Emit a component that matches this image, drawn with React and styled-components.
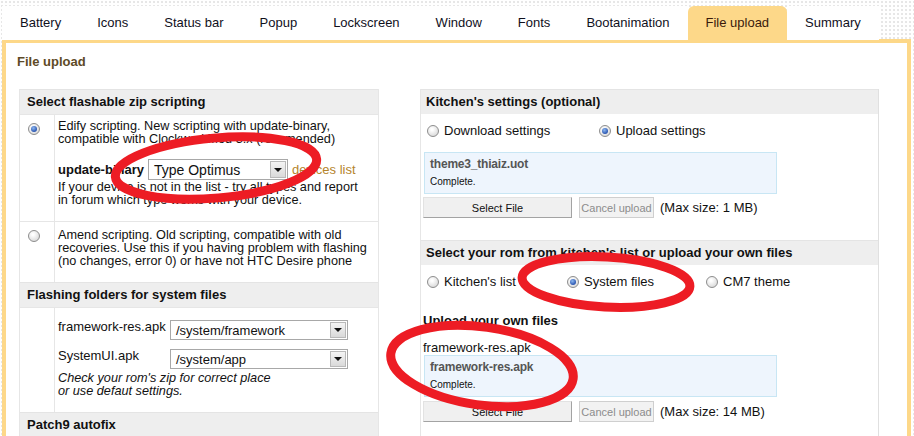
import styled, { createGlobalStyle } from "styled-components";

const GlobalStyle = createGlobalStyle`
  html, body {
    margin: 0;
    padding: 0;
  }
  body {
    font-family: "Liberation Sans", Arial, sans-serif;
    font-size: 13px;
    color: #111;
    background-color: #fff;
    background-image: radial-gradient(#e6e6e6 0.7px, transparent 0.9px);
    background-size: 4px 4px;
    overflow: hidden;
  }
`;

const tabs = [
  "Battery",
  "Icons",
  "Status bar",
  "Popup",
  "Lockscreen",
  "Window",
  "Fonts",
  "Bootanimation",
  "File upload",
  "Summary",
];

export default function App() {
  return (
    <>
      <GlobalStyle />
      <Page>
        <TabBar>
          {tabs.map((t) => (
            <Tab key={t} $active={t === "File upload"}>
              {t}
            </Tab>
          ))}
        </TabBar>
        <Panel>
          <Heading>File upload</Heading>
          <Columns>
            <LeftBox>
              <BoxHeader>Select flashable zip scripting</BoxHeader>
              <OptionRow $pt={5} $pb={14}>
                <RadioCell>
                  <Radio $checked />
                </RadioCell>
                <OptionBody>
                  <Line>Edify scripting. New scripting with update-binary,</Line>
                  <Line>compatible with ClockworkMod 3.x (recomended)</Line>
                  <BinaryRow>
                    <b>update-binary</b>
                    <Select $width={140}>
                      <SelectText $size={14}>Type Optimus</SelectText>
                      <SelectArrow />
                    </Select>
                    <DevLink>devices list</DevLink>
                  </BinaryRow>
                  <Line>If your device is not in the list - try all types and report</Line>
                  <Line>in forum which type works with your device.</Line>
                </OptionBody>
              </OptionRow>
              <OptionRow $pt={7} $pb={14}>
                <RadioCell>
                  <Radio />
                </RadioCell>
                <OptionBody>
                  <Line>Amend scripting. Old scripting, compatible with old</Line>
                  <Line>recoveries. Use this if you having problem with flashing</Line>
                  <Line>(no changes, error 0) or have not HTC Desire phone</Line>
                </OptionBody>
              </OptionRow>
              <BoxHeader>Flashing folders for system files</BoxHeader>
              <OptionRow $pt={12} $pb={14}>
                <RadioCell />
                <OptionBody>
                  <FolderRow $mb={9}>
                    <FolderLabel>framework-res.apk</FolderLabel>
                    <Select $width={178} $height={20}>
                      <SelectText>/system/framework</SelectText>
                      <SelectArrow />
                    </Select>
                  </FolderRow>
                  <FolderRow $mb={3}>
                    <FolderLabel>SystemUI.apk</FolderLabel>
                    <Select $width={178} $height={20}>
                      <SelectText>/system/app</SelectText>
                      <SelectArrow />
                    </Select>
                  </FolderRow>
                  <Hint>Check your rom's zip for correct place</Hint>
                  <Hint>or use defaut settings.</Hint>
                </OptionBody>
              </OptionRow>
              <BoxHeader>Patch9 autofix</BoxHeader>
            </LeftBox>

            <RightBox>
              <BoxHeader $pl={5}>Kitchen's settings (optional)</BoxHeader>
              <RightBody>
                <RadioLine>
                  <RadioItem $width={172}>
                    <Radio />
                    Download settings
                  </RadioItem>
                  <RadioItem>
                    <Radio $checked />
                    Upload settings
                  </RadioItem>
                </RadioLine>
                <UploadBox>
                  <FileName>theme3_thiaiz.uot</FileName>
                  <Status>Complete.</Status>
                </UploadBox>
                <ButtonRow>
                  <SelectButton>Select File</SelectButton>
                  <CancelButton>Cancel upload</CancelButton>
                  <MaxSize>(Max size: 1 MB)</MaxSize>
                </ButtonRow>
              </RightBody>
              <SectionGap />
              <BoxHeader $pl={5}>
                Select your rom from kitchen's list or upload your own files
              </BoxHeader>
              <RightBody>
                <RadioLine>
                  <RadioItem $width={140}>
                    <Radio />
                    Kitchen's list
                  </RadioItem>
                  <RadioItem $width={139}>
                    <Radio $checked />
                    System files
                  </RadioItem>
                  <RadioItem>
                    <Radio />
                    CM7 theme
                  </RadioItem>
                </RadioLine>
                <SubTitle>Upload your own files</SubTitle>
                <FileLabel>framework-res.apk</FileLabel>
                <UploadBox $mt={0}>
                  <FileName>framework-res.apk</FileName>
                  <Status>Complete.</Status>
                </UploadBox>
                <ButtonRow $mt={4}>
                  <SelectButton>Select File</SelectButton>
                  <CancelButton>Cancel upload</CancelButton>
                  <MaxSize>(Max size: 14 MB)</MaxSize>
                </ButtonRow>
              </RightBody>
            </RightBox>
          </Columns>
        </Panel>
        <Marks viewBox="0 0 914 436" width="914" height="436">
          <ellipse
            cx="216"
            cy="168"
            rx="101"
            ry="30"
            transform="rotate(-5 216 168)"
          />
          <ellipse
            cx="606"
            cy="282"
            rx="84"
            ry="25"
            transform="rotate(3 606 282)"
          />
          <ellipse
            cx="482"
            cy="366"
            rx="92"
            ry="39"
            transform="rotate(8 482 366)"
          />
        </Marks>
      </Page>
    </>
  );
}

const Page = styled.div`
  position: relative;
  width: 914px;
  height: 436px;
  padding: 6px 0 0 2px;
  box-sizing: border-box;
  overflow: hidden;
`;

const TabBar = styled.div`
  display: flex;
  height: 34px;
`;

const Tab = styled.div`
  padding: 0 18px;
  line-height: 34px;
  font-size: 13px;
  background: ${(p) => (p.$active ? "#fdd889" : "#fff")};
  border-radius: ${(p) => (p.$active ? "6px 6px 0 0" : "0")};
  color: ${(p) => (p.$active ? "#3a1a0c" : "#10101c")};
  white-space: nowrap;
`;

const Panel = styled.div`
  width: 909px;
  height: 400px;
  box-sizing: border-box;
  border: 4px solid #fdd889;
  border-bottom: none;
  background: #fff;
  margin-top: -1px;
`;

const Heading = styled.div`
  padding: 11px 0 0 11px;
  height: 35px;
  box-sizing: border-box;
  line-height: 15px;
  font-weight: bold;
  color: #5e4a26;
`;

const Columns = styled.div`
  display: flex;
  gap: 41px;
  padding-left: 13px;
  margin-top: 11px;
`;

const LeftBox = styled.div`
  width: 360px;
  box-sizing: border-box;
  border-left: 1px solid #e6e6e6;
  border-right: 1px solid #e6e6e6;
`;

const RightBox = styled.div`
  width: 459px;
  height: 360px;
  box-sizing: border-box;
  border-left: 1px solid #e6e6e6;
  border-right: 1px solid #e0e0e0;
`;

const BoxHeader = styled.div`
  height: 24px;
  line-height: 24px;
  padding-left: ${(p) => p.$pl ?? 7}px;
  background: #eeeeee;
  border-top: 1px solid #e4e4e4;
  font-weight: bold;
  white-space: nowrap;
`;

const OptionRow = styled.div`
  display: grid;
  grid-template-columns: 35px 1fr;
  border-top: 1px solid #e6e6e6;
  & > div:last-child {
    padding-top: ${(p) => p.$pt}px;
    padding-bottom: ${(p) => p.$pb}px;
  }
`;

const RadioCell = styled.div`
  border-right: 1px solid #e6e6e6;
  padding: 8px 0 0 8px;
`;

const OptionBody = styled.div`
  padding-left: 3px;
`;

const Line = styled.div`
  font-size: 12.7px;
  line-height: 13px;
  white-space: nowrap;
`;

const Hint = styled(Line)`
  font-style: italic;
`;

const BinaryRow = styled.div`
  display: flex;
  align-items: center;
  gap: 4px;
  margin: 13px 0 1px;
  height: 21px;
  white-space: nowrap;
`;

const DevLink = styled.span`
  color: #b5842c;
`;

const Select = styled.div`
  display: flex;
  align-items: stretch;
  width: ${(p) => p.$width}px;
  height: ${(p) => p.$height ?? 21}px;
  box-sizing: border-box;
  border: 1px solid #a8a8a8;
  background: #fff;
`;

const SelectText = styled.span`
  flex: 1;
  padding-left: 5px;
  font-size: ${(p) => p.$size ?? 13}px;
  display: flex;
  align-items: center;
  white-space: nowrap;
`;

const SelectArrow = styled.span`
  width: 16px;
  margin: 1px;
  background: linear-gradient(#f4f4f4, #d9d9d9);
  border: 1px solid #b9b9b9;
  box-sizing: border-box;
  display: flex;
  align-items: center;
  justify-content: center;
  &::after {
    content: "";
    border-left: 4px solid transparent;
    border-right: 4px solid transparent;
    border-top: 4px solid #111;
  }
`;

const FolderRow = styled.div`
  display: flex;
  align-items: flex-start;
  margin-bottom: ${(p) => p.$mb}px;
`;

const FolderLabel = styled.span`
  width: 112px;
  line-height: 13px;
  white-space: nowrap;
`;

const Radio = styled.span`
  display: inline-block;
  flex: none;
  width: 12px;
  height: 12px;
  box-sizing: border-box;
  border-radius: 50%;
  border: 1px solid #8d8d8d;
  background: radial-gradient(circle at 40% 35%, #ffffff 10%, #d4d4d4 90%);
  position: relative;
  &::after {
    content: "";
    display: ${(p) => (p.$checked ? "block" : "none")};
    position: absolute;
    left: 2px;
    top: 2px;
    width: 6px;
    height: 6px;
    border-radius: 50%;
    background: radial-gradient(circle at 40% 35%, #8db8f0, #2a55b0 70%);
  }
`;

const RightBody = styled.div`
  padding: 10px 0 0 2px;
`;

const RadioLine = styled.div`
  display: flex;
  padding-left: 4px;
  height: 14px;
`;

const RadioItem = styled.label`
  display: flex;
  align-items: center;
  gap: 5px;
  width: ${(p) => (p.$width ? `${p.$width}px` : "auto")};
  white-space: nowrap;
  line-height: 14px;
`;

const UploadBox = styled.div`
  width: 353px;
  height: 42px;
  box-sizing: border-box;
  margin-top: ${(p) => p.$mt ?? 14}px;
  margin-left: 1px;
  padding: 4px 0 0 5px;
  background: #eef5fd;
  border: 1px solid #c8e6f4;
`;

const FileName = styled.div`
  font-size: 12px;
  line-height: 14px;
  color: #555;
  font-weight: bold;
  letter-spacing: -0.2px;
`;

const Status = styled.div`
  font-size: 10px;
  line-height: 10px;
  margin-top: 6px;
  color: #111;
`;

const ButtonRow = styled.div`
  display: flex;
  align-items: center;
  margin-top: ${(p) => p.$mt ?? 3}px;
  height: 21px;
`;

const SelectButton = styled.div`
  width: 149px;
  height: 21px;
  box-sizing: border-box;
  background: #f0f0f0;
  border: 1px solid #e2e2e2;
  border-right-color: #a3a3a3;
  border-bottom-color: #a3a3a3;
  font-size: 11px;
  display: flex;
  align-items: center;
  justify-content: center;
`;

const CancelButton = styled.div`
  margin-left: 7px;
  width: 75px;
  height: 21px;
  box-sizing: border-box;
  background: #f2f2f2;
  border: 1px solid #cfcfcf;
  color: #8c8c8c;
  font-size: 11px;
  display: flex;
  align-items: center;
  justify-content: center;
  white-space: nowrap;
`;

const MaxSize = styled.span`
  margin-left: 6px;
  white-space: nowrap;
`;

const SectionGap = styled.div`
  height: 22px;
`;

const SubTitle = styled.div`
  margin-top: 25px;
  font-weight: bold;
  line-height: 14px;
`;

const FileLabel = styled.div`
  margin-top: 13px;
  line-height: 14px;
`;

const Marks = styled.svg`
  position: absolute;
  left: 0;
  top: 0;
  pointer-events: none;
  & ellipse {
    fill: none;
    stroke: #ed1c24;
    stroke-width: 9;
  }
`;
